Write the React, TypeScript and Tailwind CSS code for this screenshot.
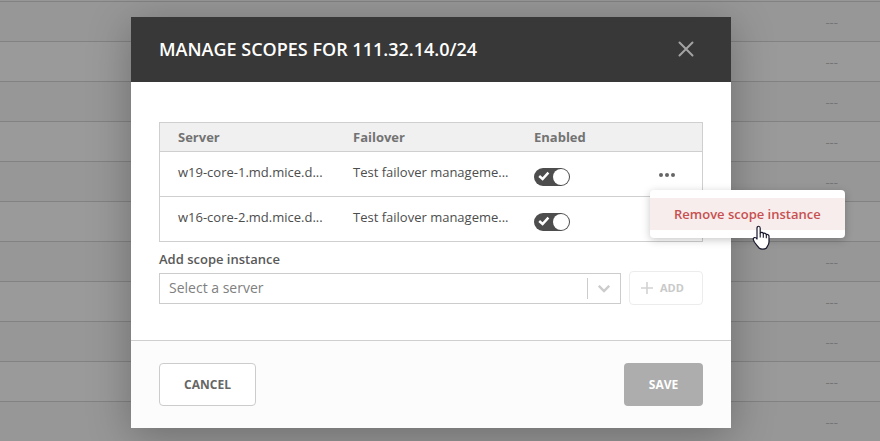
const servers = ['w19-core-1.md.mice.d...', 'w16-core-2.md.mice.d...'];

function Toggle() {
  return (
    <span className="flex h-[18px] w-9 items-center justify-between rounded-full bg-[#4d4d4d] pl-[4px] pr-px">
      <svg width="12" height="10" viewBox="0 0 12 10" fill="none" className="mb-[2px]">
        <path d="M1.2 5 4.6 8 10.4 1.6" stroke="#fff" strokeWidth="2.5" />
      </svg>
      <span className="size-4 rounded-full bg-white" />
    </span>
  );
}

function Backdrop() {
  return (
    <div className="h-full overflow-hidden bg-[#979797]">
      <div className="h-[2px] border-b border-[#828282]" />
      {Array.from({ length: 11 }, (_, i) => (
        <div
          key={i}
          className="flex h-10 justify-end border-b border-[#828282] pr-[42px] text-[13px] leading-[40px] text-[#747474] even:bg-[#979797] odd:bg-[#9a9a9a]"
        >
          ---
        </div>
      ))}
    </div>
  );
}

function ActionMenu() {
  return (
    <div className="absolute left-[519px] top-[173px] z-10 w-[195px] rounded-[4px] bg-white py-2 shadow-[0_2px_8px_rgba(0,0,0,0.22)]">
      <div className="h-8 bg-[#f8eded] pl-6 text-[13px] font-semibold leading-8 text-[#c75050]">
        Remove scope instance
      </div>
      <svg className="absolute left-[102px] top-[35px]" width="19" height="26" viewBox="0 0 19 26">
        <path
          d="M5 14V3.2C5 .6 8.2.6 8.2 3.2V8c1-1 2.9-.7 3.1.6 1-.8 2.8-.3 3 1 1.200-.5 2.700.2 2.700 1.700V17c0 3-2 4.500-2.500 6-2 1.500-5.500 1.500-7.500 0C5.500 20.500 2 18 1.300 14.500 1 12.500 3.500 11.500 5 14Z"
          fill="#fff"
          stroke="#15152a"
          strokeWidth="1.200"
          strokeLinejoin="round"
        />
        <path d="M8.200 8v4.500M11.300 8.800v4M14.300 9.800v3.500" stroke="#15152a" strokeWidth="1.100" />
      </svg>
    </div>
  );
}

export default function App() {
  return (
    <div className="relative h-[441px] w-[880px] overflow-hidden font-['Open_Sans',sans-serif]">
      <Backdrop />
      <div className="absolute left-[131px] top-[17px] flex h-[411px] w-[600px] flex-col bg-white shadow-[0_8px_40px_rgba(0,0,0,0.28)]">
        <header className="flex h-[65px] shrink-0 items-center justify-between bg-[#383838] pl-7 pr-[37px]">
          <h1 className="mb-[2px] text-[18px] font-semibold leading-6 text-white">MANAGE SCOPES FOR 111.32.14.0/24</h1>
          <svg width="16" height="16" viewBox="0 0 16 16" stroke="#a3a3a3" strokeWidth="2" strokeLinecap="round" className="mb-px">
            <path d="m1.500 1.500 13 13M14.500 1.500l-13 13" />
          </svg>
        </header>
        <main className="flex h-[258px] shrink-0 flex-col px-7 pt-10 text-[13px]">
          <div className="h-[120px] border border-[#cfcfcf]">
            <div className="flex h-[28px] items-center bg-[#f0f0f0] pl-[18px] pt-[2px] font-bold text-[#737373]">
              <span className="w-[175px]">Server</span>
              <span className="w-[181px]">Failover</span>
              <span>Enabled</span>
            </div>
            {servers.map((server, i) => (
              <div key={server} className="flex h-[45px] border-t border-[#cfcfcf] pl-[18px] text-[#4d4d4d]">
                <span className="w-[175px] pt-[11px]">{server}</span>
                <span className="w-[181px] pt-[11px]">Test failover manageme...</span>
                <span className="pt-4">
                  <Toggle />
                </span>
                {i === 0 && (
                  <span className="ml-[89px] flex gap-[2px] pt-[21px]">
                    <i className="size-1 rounded-full bg-[#666]" />
                    <i className="size-1 rounded-full bg-[#666]" />
                    <i className="size-1 rounded-full bg-[#666]" />
                  </span>
                )}
              </div>
            ))}
          </div>
          <div className="mt-[7px] h-[22px] font-semibold leading-5 text-[#595959]">Add scope instance</div>
          <div className="flex items-center justify-between">
            <div className="flex h-[31px] w-[462px] items-center border border-[#cccccc] pl-[9px] text-[14px] text-[#808080]">
              <span className="w-[418px] pb-[2px]">Select a server</span>
              <span className="h-[21px] w-px bg-[#cccccc]" />
              <svg className="ml-[10px] mt-[2px]" width="12" height="8" viewBox="0 0 12 8" fill="none">
                <path d="m.8.8 5.200 5.200L11.200.8" stroke="#ccc" strokeWidth="2.400" />
              </svg>
            </div>
            <div className="flex h-[34px] w-[74px] items-center rounded-[4px] border border-[#ececec] pl-[11px] text-[11px] font-bold text-[#c9c9c9]">
              <svg width="12" height="12" viewBox="0 0 12 12" stroke="#d2d2d2" strokeWidth="1.600">
                <path d="M6 0v12M0 6h12" />
              </svg>
              <span className="ml-[7px]">ADD</span>
            </div>
          </div>
        </main>
        <footer className="flex flex-1 items-start justify-between border-t border-[#cfcfcf] bg-[#fcfcfc] px-7 pt-[22px] text-[12px] font-bold">
          <button className="h-[43px] w-[97px] rounded-[4px] border border-[#cccccc] bg-white text-[#666]">CANCEL</button>
          <button className="h-[43px] w-[79px] rounded-[4px] bg-[#adadad] text-white">SAVE</button>
        </footer>
        <ActionMenu />
      </div>
    </div>
  );
}
